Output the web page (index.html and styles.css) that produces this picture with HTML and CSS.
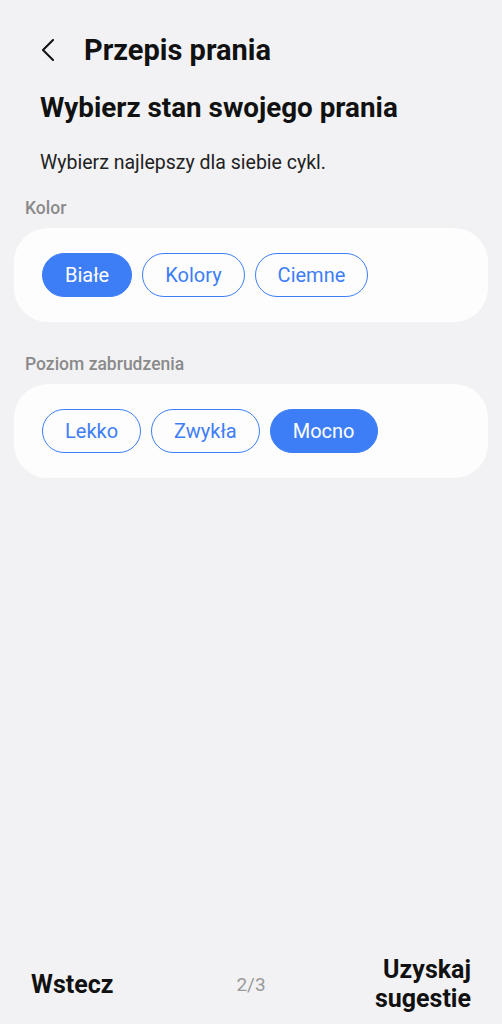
FILE: index.html
```html
<!DOCTYPE html>
<html lang="pl">
<head>
<meta charset="UTF-8">
<meta name="viewport" content="width=device-width, initial-scale=1.0">
<link rel="stylesheet" href="styles.css">
<title>Przepis prania</title>
</head>
<body>

<div id="screen">
  <div class="header">
    <button class="back" aria-label="Wstecz">
      <svg width="16" height="22" viewBox="0 0 16 22">
        <path d="M13 1 L3 11 L13 21" fill="none" stroke="#111" stroke-width="2" stroke-linecap="round" stroke-linejoin="round"/>
      </svg>
    </button>
    <h1>Przepis prania</h1>
  </div>

  <h2>Wybierz stan swojego prania</h2>
  <p class="intro">Wybierz najlepszy dla siebie cykl.</p>

  <div class="section-label">Kolor</div>
  <div class="card">
    <button class="chip active">Białe</button>
    <button class="chip">Kolory</button>
    <button class="chip">Ciemne</button>
  </div>

  <div class="section-label">Poziom zabrudzenia</div>
  <div class="card">
    <button class="chip">Lekko</button>
    <button class="chip">Zwykła</button>
    <button class="chip active">Mocno</button>
  </div>

  <div class="spacer"></div>

  <div class="footer">
    <button class="nav-btn">Wstecz</button>
    <span class="step">2/3</span>
    <button class="nav-btn right">Uzyskaj<br>sugestie</button>
  </div>
</div>

</body>
</html>
```

FILE: styles.css
```css
* {
  box-sizing: border-box;
}
body {
  margin: 0;
  font-family: Roboto, "Noto Sans", sans-serif;
  background-color: #f2f2f4;
  color: #111;
}
button {
  font-family: inherit;
  background: none;
  border: none;
  padding: 0;
  cursor: pointer;
}
#screen {
  display: flex;
  flex-direction: column;
  height: 1024px;
  padding: 0 14px;
}
.header {
  display: flex;
  align-items: center;
  height: 50px;
  margin-top: 25px;
  padding-left: 26px;
}
.back {
  display: flex;
  width: 44px;
  height: 30px;
  align-items: center;
}
h1 {
  margin: 0;
  font-size: 29px;
  font-weight: 700;
}
h2 {
  margin: 17px 0 0 26px;
  font-size: 27.8px;
  font-weight: 700;
  line-height: 32px;
}
.intro {
  margin: 27px 0 0 26px;
  font-size: 19.5px;
  line-height: 24px;
  color: #222;
}
.section-label {
  margin: 22px 0 0 11px;
  font-size: 17.5px;
  line-height: 22px;
  font-weight: 500;
  color: #8a8a8a;
}
.card + .section-label {
  margin-top: 31px;
}
.section-label + .card {
  margin-top: 9px;
}
.card {
  display: flex;
  gap: 10px;
  padding: 25px 28px;
  background-color: #fdfdfd;
  border-radius: 34px;
}
.chip {
  height: 44px;
  padding: 0 22px;
  font-size: 20px;
  color: #3d7ef7;
  border: 1.5px solid #3d7ef7;
  border-radius: 22px;
}
.chip.active {
  background-color: #3d7ef7;
  color: #fff;
}
.spacer {
  flex: 1;
}
.footer {
  display: flex;
  align-items: center;
  justify-content: space-between;
  height: 60px;
  margin-bottom: 10px;
  padding: 0 17px;
}
.nav-btn {
  font-size: 25px;
  font-weight: 700;
  color: #111;
  line-height: 29px;
  min-width: 100px;
  text-align: left;
}
.nav-btn.right {
  text-align: right;
}
.step {
  font-size: 19px;
  color: #9a9a9a;
}
```
